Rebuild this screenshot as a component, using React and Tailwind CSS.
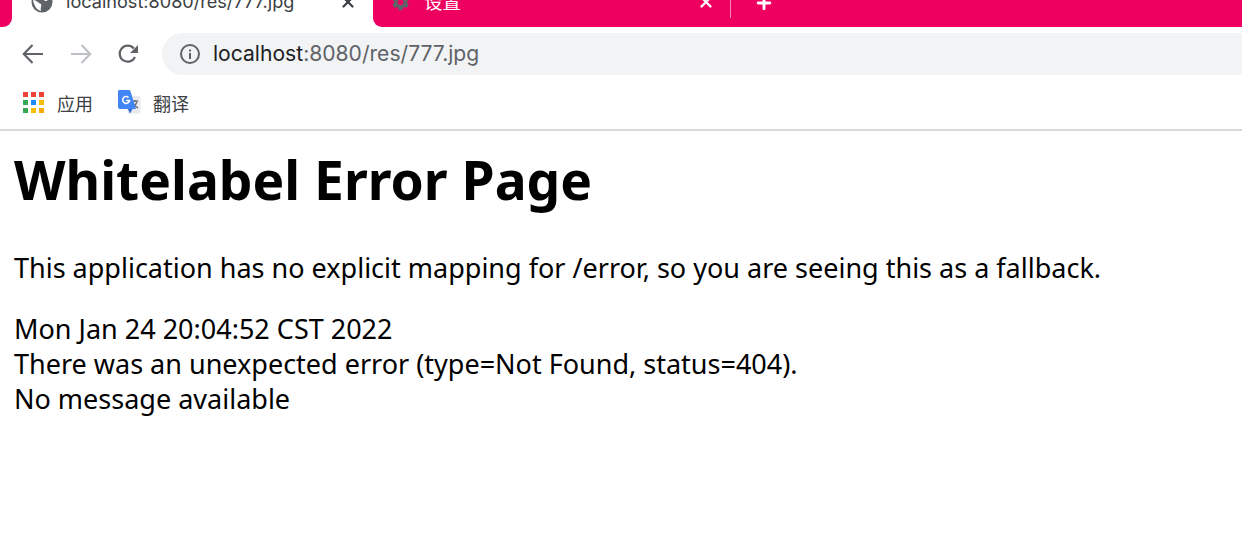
import { Plus, X } from "lucide-react";

const font = { sans: "font-['Noto_Sans','Noto_Sans_CJK_SC',sans-serif]" };

function AppsIcon() {
  const colors = ["#ef4135", "#ef4135", "#ef4135", "#34a853", "#1a8cff", "#fbbc05", "#34a853", "#fbbc05", "#fbab05"];
  return (
    <div className="grid grid-cols-3 gap-[3px] w-[21px] -mt-[5px]">
      {colors.map((c, i) => (
        <svg key={i} width="5" height="5"><rect width="5" height="5" fill={c} /></svg>
      ))}
    </div>
  );
}

function TranslateIcon() {
  return (
    <svg width="24" height="26" viewBox="0 0 24 26">
      <path d="M8 6 H22 a1.5 1.5 0 0 1 1.5 1.5 V22 a1.5 1.5 0 0 1 -1.5 1.5 H11 Z" fill="#e8eaed" />
      <path d="M15 11 h6 M18 10 v2 M20 12 c-1 3 -3 5 -5 6 M16 13 c1 2 3 4 5 5" stroke="#70757a" strokeWidth="1.4" fill="none" />
      <path d="M2 0 H12 a1.5 1.5 0 0 1 1.4 1 L19 19 H3 a2 2 0 0 1 -2 -2 V1.5 A1.5 1.5 0 0 1 2 0 Z" fill="#4285f4" />
      <path d="M11 19 L13 23.5 L15.5 19 Z" fill="#3367d6" />
      <path d="M11.5 7.5 a3.4 3.4 0 1 0 1 3 H9" stroke="#fff" strokeWidth="1.6" fill="none" />
    </svg>
  );
}

function GlobeIcon() {
  return (
    <svg width="22" height="22" viewBox="0 0 22 22">
      <circle cx="11" cy="11" r="10.5" fill="#5f6368" />
      <path d="M2 9 C6 9 7 12 10 13 C11 15 9 17 10 20 C6 19 3 15 2 9 Z M12 4 C15 3 17 4 19 7 C17 8 17 10 14 10 C12 9 13 6 12 4 Z" fill="#fff" />
    </svg>
  );
}

function GearIcon() {
  return (
    <svg width="20" height="20" viewBox="0 0 24 24">
      <path d="M19.4 13c.1-.3.1-.7.1-1s0-.7-.1-1l2.1-1.6c.2-.2.2-.4.1-.6l-2-3.5c-.1-.2-.4-.3-.6-.2l-2.5 1c-.5-.4-1.1-.7-1.7-1L14 2.400c0-.2-.2-.4-.5-.4h-4c-.2 0-.4.2-.5.4l-.4 2.700c-.6.2-1.100.6-1.700 1l-2.500-1c-.2-.1-.5 0-.6.2l-2 3.500c-.1.2-.1.4.1.6L4 11c0 .3-.1.7-.1 1s0 .7.1 1l-2.100 1.600c-.2.2-.2.4-.1.6l2 3.500c.1.2.4.3.6.2l2.500-1c.5.4 1.100.7 1.700 1l.4 2.700c0 .2.2.4.5.4h4c.3 0 .5-.2.5-.4l.4-2.700c.6-.2 1.200-.6 1.700-1l2.500 1c.2.1.5 0 .6-.2l2-3.500c.1-.2.1-.4-.1-.6zM11.500 15.500a3.500 3.500 0 1 1 0-7 3.500 3.500 0 0 1 0 7z" fill="#5f6368" />
    </svg>
  );
}

function NavButtons() {
  return (
    <div className="flex items-center w-[162px] pl-[22px]">
      <svg width="22" height="22" viewBox="0 0 22 22" fill="none" stroke="#5f6368" strokeWidth="2.2">
        <path d="M21 11 H2 M10.500 2 L1.800 11 L10.500 20" />
      </svg>
      <svg className="ml-[26px]" width="22" height="22" viewBox="0 0 22 22" fill="none" stroke="#bdc1c6" strokeWidth="2.2">
        <path d="M1 11 H20 M11.500 2 L20.200 11 L11.500 20" />
      </svg>
      <svg className="ml-[25px]" width="22" height="22" viewBox="0 0 22 22" fill="none">
        <path d="M18 14 A8 8 0 1 1 16.800 5.500" stroke="#5f6368" strokeWidth="2.200" />
        <path d="M21 2 V10 H13 Z" fill="#5f6368" />
      </svg>
    </div>
  );
}

export default function App() {
  return (
    <div className={`${font.sans} h-[560px] bg-white overflow-hidden`}>
      <div className="flex h-[27px] overflow-hidden">
        <div className="w-[12px] bg-[#ee0060] rounded-br-[9px]" />
        <div className="w-[361px] flex items-center h-[4px] pl-[19px] pr-[16px] text-[#3c4043]">
          <GlobeIcon />
          <span className="ml-[13px] flex-1 font-['Inter','Noto_Sans',sans-serif] text-[18.1px]">localhost:8080/res/777.jpg</span>
          <X size={18} strokeWidth={3} color="#3c4043" />
        </div>
        <div className="flex-1 bg-[#ee0060] rounded-bl-[9px] flex items-start h-[27px]">
          <div className="flex items-center h-[4px] w-[357px] pl-[18px] pr-[15px] text-white text-[18.5px]">
            <GearIcon />
            <span className="ml-[13px] flex-1">设置</span>
            <X size={18} strokeWidth={3} color="#fff" />
          </div>
          <div className="w-px h-[18px] bg-[#f58ab5]" />
          <Plus className="ml-[23px] -mt-[7px]" size={20} strokeWidth={3.5} color="#fff" />
        </div>
      </div>

      <div className="flex items-center h-[55px] -mt-px">
        <NavButtons />
        <div className="flex-1 h-[42px] -mr-[60px] rounded-full bg-[#f1f3f4] flex items-center pl-[17px]">
          <svg width="22" height="22" viewBox="0 0 22 22" fill="none">
            <circle cx="11" cy="11" r="9" stroke="#5f6368" strokeWidth="2" />
            <rect x="10" y="10" width="2" height="6" fill="#5f6368" />
            <rect x="10" y="6.500" width="2" height="2" fill="#5f6368" />
          </svg>
          <span className="ml-[12px] mt-[1px] font-['Inter','Noto_Sans',sans-serif] text-[21.1px] text-[#5f6368]">
            <span className="text-[#202124]">localhost</span>:8080/res/777.jpg
          </span>
        </div>
      </div>

      <div className="flex items-center h-[48px] pl-[23px] text-[18px] text-[#3c4043]">
        <AppsIcon />
        <span className="ml-[13px] -mt-[2px]">应用</span>
        <div className="ml-[24px] -mt-[4px]"><TranslateIcon /></div>
        <span className="ml-[12px] -mt-[2px]">翻译</span>
      </div>
      <div className="h-[2px] bg-[#d9d9d9]" />

      <div className="px-[14px] text-black text-[27px] leading-[35px]">
        <h1 className="font-bold text-[53.3px] leading-[74px] mt-[12px] mb-[33px]">Whitelabel Error Page</h1>
        <p>This application has no explicit mapping for /error, so you are seeing this as a fallback.</p>
        <div className="mt-[26px]">Mon Jan 24 20:04:52 CST 2022</div>
        <div>There was an unexpected error (type=Not Found, status=404).</div>
        <div>No message available</div>
      </div>
    </div>
  );
}
